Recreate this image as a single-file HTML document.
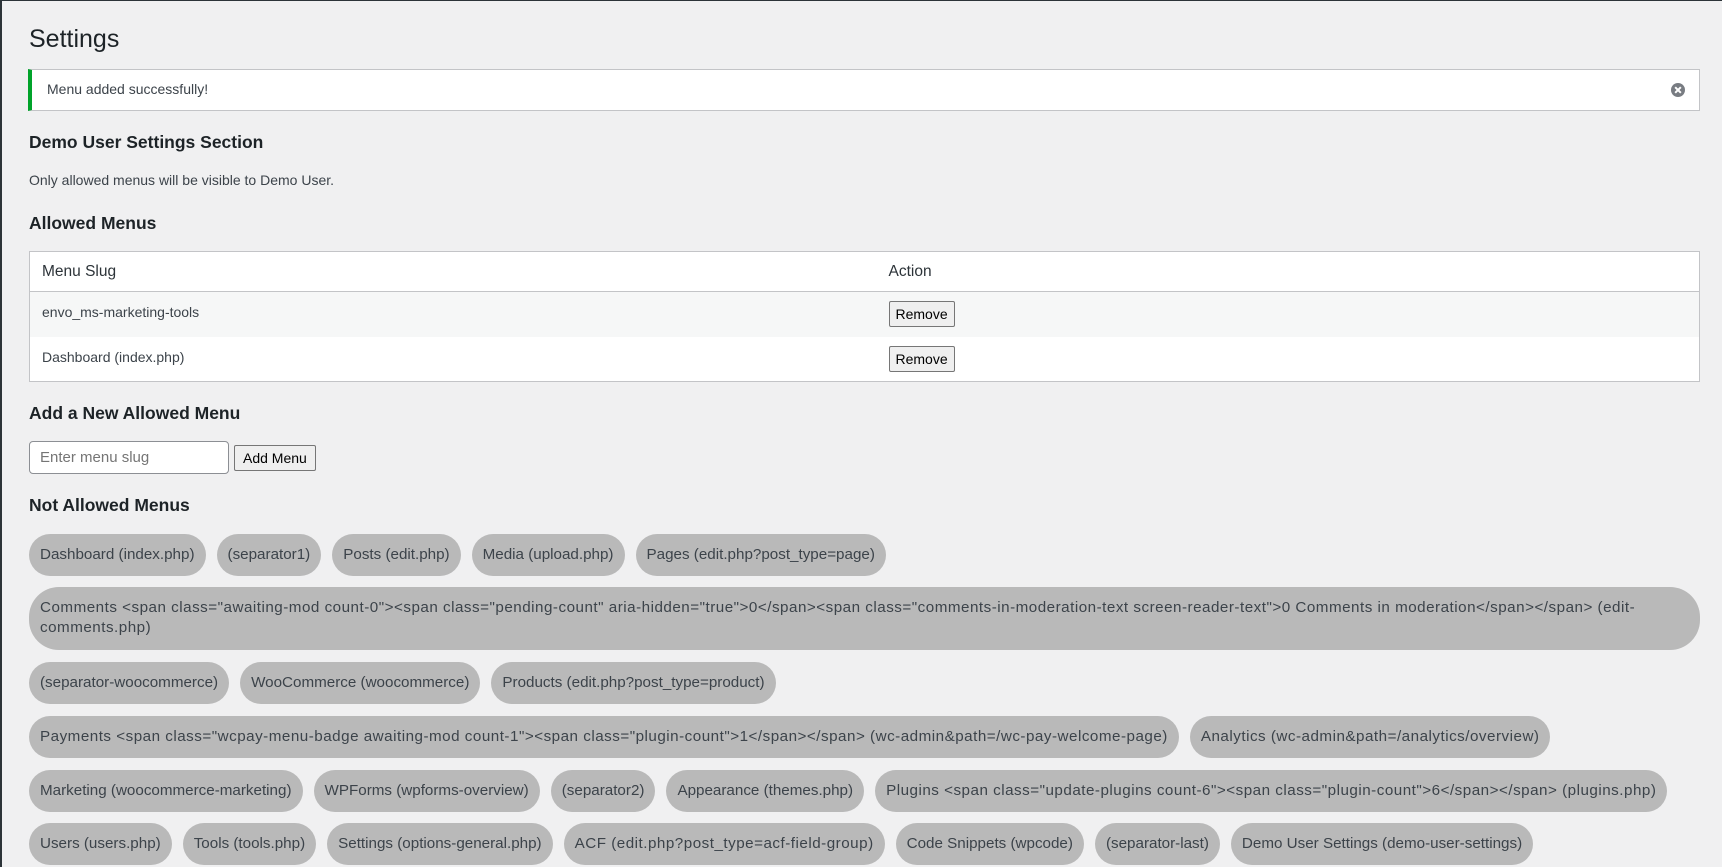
<!DOCTYPE html>
<html><head><meta charset="utf-8"><style>
*{box-sizing:border-box}
html,body{margin:0;padding:0}
body{width:1722px;height:867px;overflow:hidden;background:#f0f0f1;font-family:"Liberation Sans",sans-serif;color:#3c434a;position:relative;border-top:1px solid #2c3338;border-left:2px solid #2c3338}
.a{position:absolute}
h1{position:absolute;left:27px;top:24px;margin:0;font-size:25px;font-weight:400;color:#1d2327}
.notice{left:26px;top:68px;width:1672px;height:42px;background:#fff;border:1px solid #c3c4c7;border-left:4px solid #00a32a;font-size:14px;color:#3c434a;padding:11px 0 0 15px}
.close{right:14px;top:13px;width:14px;height:14px;border-radius:50%;background:#787c82}
.close:before,.close:after{content:"";position:absolute;left:6px;top:3px;width:2px;height:8px;background:#fff;transform:rotate(45deg)}
.close:after{transform:rotate(-45deg)}
h2{position:absolute;left:27px;margin:0;font-size:17.5px;font-weight:600;color:#1d2327}
.p{left:27px;top:171px;font-size:14px}
table{position:absolute;left:27px;top:250px;width:1671px;border:1px solid #c3c4c7;border-collapse:collapse;background:#fff;font-size:14px}
th{font-weight:400;text-align:left;height:40px;padding:0 12px;font-size:15.5px;color:#2c3338;border-bottom:1px solid #c3c4c7}
td{height:45px;padding:0 12px;vertical-align:middle}
tr.s td{background:#f6f7f7}
.btn{display:inline-block;border:1px solid #767676;background:#efefef;border-radius:2px;font-size:14px;color:#000;padding:3px 6px;line-height:18px}
.inp{left:27px;top:440px;width:200px;height:33px;background:#fff;border:1px solid #8c8f94;border-radius:4px;font-size:15px;color:#757575;padding:7px 0 0 10px}
.row{position:absolute;left:27px;width:1671px;display:flex;gap:11px}
.pill{background:#b9b9b9;border-radius:22px;font-size:15.2px;color:#3c434a;padding:11px 11px;line-height:20px;white-space:nowrap;height:42px}
.w{letter-spacing:0.5px}
.full{white-space:nowrap;overflow:hidden;width:1671px;height:63px;border-radius:30px}
</style></head><body>
<h1>Settings</h1>
<div class="a notice">Menu added successfully!<span class="a close"></span></div>
<h2 style="top:131px">Demo User Settings Section</h2>
<div class="a p">Only allowed menus will be visible to Demo User.</div>
<h2 style="top:212px">Allowed Menus</h2>
<table>
<tr><th style="width:847px">Menu Slug</th><th>Action</th></tr>
<tr class="s"><td style="vertical-align:top;padding-top:12px">envo_ms-marketing-tools</td><td><span class="btn">Remove</span></td></tr>
<tr><td style="vertical-align:top;padding-top:12px">Dashboard (index.php)</td><td><span class="btn">Remove</span></td></tr>
</table>
<h2 style="top:402px">Add a New Allowed Menu</h2>
<div class="a inp">Enter menu slug</div>
<div class="a btn" style="left:232px;top:444px;padding:3px 8px">Add Menu</div>
<h2 style="top:494px">Not Allowed Menus</h2>
<div class="row" style="top:533px"><span class="pill">Dashboard (index.php)</span><span class="pill">(separator1)</span><span class="pill">Posts (edit.php)</span><span class="pill">Media (upload.php)</span><span class="pill">Pages (edit.php?post_type=page)</span></div>
<div class="row" style="top:586px"><span class="pill full w">Comments &lt;span class="awaiting-mod count-0"&gt;&lt;span class="pending-count" aria-hidden="true"&gt;0&lt;/span&gt;&lt;span class="comments-in-moderation-text screen-reader-text"&gt;0 Comments in moderation&lt;/span&gt;&lt;/span&gt; (edit-<br>comments.php)</span></div>
<div class="row" style="top:661px"><span class="pill">(separator-woocommerce)</span><span class="pill">WooCommerce (woocommerce)</span><span class="pill">Products (edit.php?post_type=product)</span></div>
<div class="row" style="top:715px"><span class="pill w">Payments &lt;span class="wcpay-menu-badge awaiting-mod count-1"&gt;&lt;span class="plugin-count"&gt;1&lt;/span&gt;&lt;/span&gt; (wc-admin&amp;path=/wc-pay-welcome-page)</span><span class="pill w">Analytics (wc-admin&amp;path=/analytics/overview)</span></div>
<div class="row" style="top:769px"><span class="pill">Marketing (woocommerce-marketing)</span><span class="pill">WPForms (wpforms-overview)</span><span class="pill">(separator2)</span><span class="pill">Appearance (themes.php)</span><span class="pill w">Plugins &lt;span class="update-plugins count-6"&gt;&lt;span class="plugin-count"&gt;6&lt;/span&gt;&lt;/span&gt; (plugins.php)</span></div>
<div class="row" style="top:822px"><span class="pill">Users (users.php)</span><span class="pill">Tools (tools.php)</span><span class="pill">Settings (options-general.php)</span><span class="pill w">ACF (edit.php?post_type=acf-field-group)</span><span class="pill">Code Snippets (wpcode)</span><span class="pill">(separator-last)</span><span class="pill">Demo User Settings (demo-user-settings)</span></div>
</body></html>
